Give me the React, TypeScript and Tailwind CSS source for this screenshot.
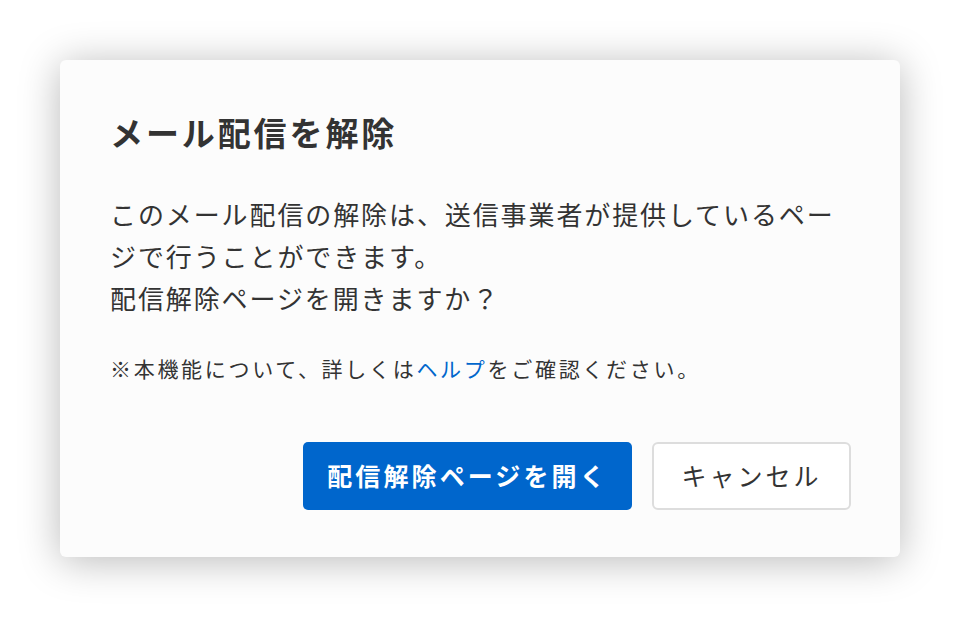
export default function App() {
    return (
        <div
            className="min-h-[618px] w-[960px] bg-white p-[60px]"
            style={{ fontFamily: '"Noto Sans CJK JP", "Noto Sans", sans-serif' }}
        >
            <div className="flex h-[497px] w-[840px] flex-col rounded-[6px] bg-[#fcfcfc] pt-[50px] pr-[49px] pb-[47px] pl-[50px] shadow-[0_4px_40px_rgba(0,0,0,0.28)]">
                {/* Title */}
                <h2 className="text-[33px] leading-[44px] font-bold tracking-[2.9px] text-[#333333]">
                    メール配信を解除
                </h2>

                {/* Body */}
                <p className="mt-[39px] text-[26px] leading-[42px] tracking-[1.9px] whitespace-nowrap text-[#333333]">
                    このメール配信の解除は、送信事業者が提供しているペー
                    <br />
                    ジで行うことができます。
                    <br />
                    配信解除ページを開きますか？
                </p>

                <p className="mt-[33px] text-[21px] leading-[32px] tracking-[2.7px] text-[#333333]">
                    ※本機能について、詳しくは
                    <a href="#" className="text-[#0066cc]">
                        ヘルプ
                    </a>
                    をご確認ください。
                </p>

                {/* Actions */}
                <div className="mt-auto flex justify-end gap-[20px]">
                    <button
                        type="button"
                        className="h-[68px] w-[329px] rounded-[5px] bg-[#0066cc] text-[25px] font-bold tracking-[3.1px] text-white"
                    >
                        配信解除ページを開く
                    </button>
                    <button
                        type="button"
                        className="h-[68px] w-[199px] rounded-[6px] border-2 border-[#dddddd] bg-white text-[25px] tracking-[3px] text-[#333333]"
                    >
                        キャンセル
                    </button>
                </div>
            </div>
        </div>
    );
}
